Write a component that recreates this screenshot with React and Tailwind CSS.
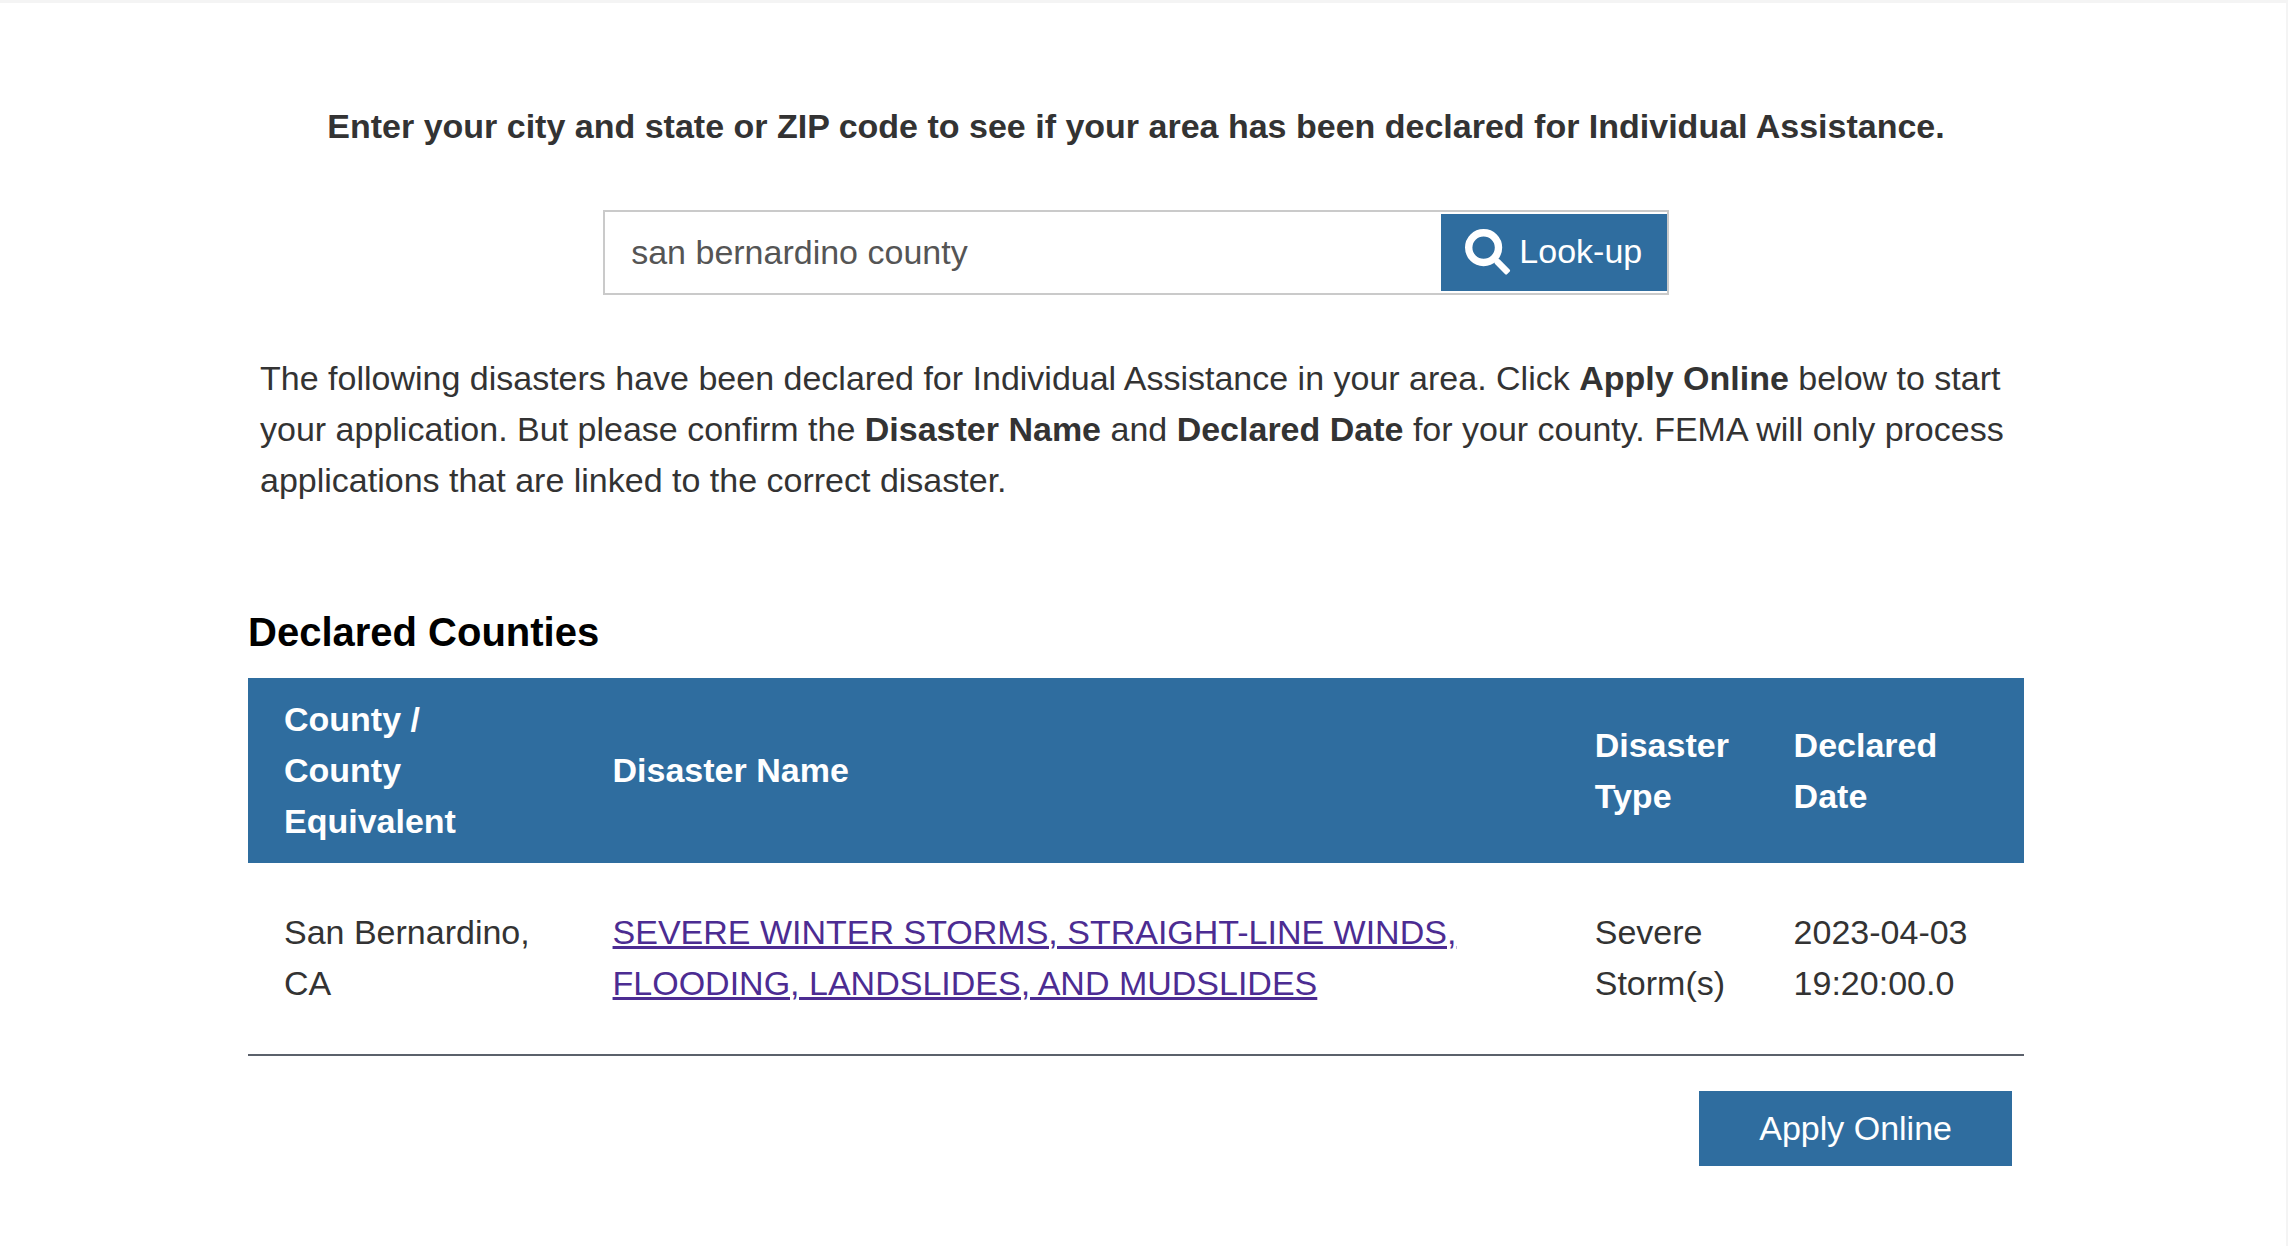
import React from 'react';

const lookup = 'san bernardino county';

function SearchIcon() {
  return (
    <svg viewBox="0 0 46 46" className="size-[46px]" aria-hidden="true" fill="currentColor">
      <circle cx="18.6" cy="18.6" r="14.9" strokeWidth="7.4" stroke="currentColor" fill="none" />
      <path d="M28 27 30.8 30.2Q33 29.2 34.7 30.6L44.8 40.7Q45.6 41.6 44.8 42.4L42 45.3Q41.1 46 40.2 45.2L29.8 34.8Q28.8 33 30 31L26 28Z" />
    </svg>
  );
}

export default function App() {
  return (
    <main className="min-h-screen border-t-3 border-r-2 border-[#f4f4f4] bg-white pr-3.5 font-['Liberation_Sans',sans-serif] text-[34px] leading-[51px] text-[#333333]">
      <div className="mx-auto w-full max-w-[1776px] pt-[98px]">
        <form onSubmit={(e) => e.preventDefault()}>
          <label htmlFor="area" className="block text-center font-bold">
            Enter your city and state or ZIP code to see if your area has been declared for Individual Assistance.
          </label>
          <div className="mx-auto mt-[58px] flex h-[85px] w-3/5 items-stretch border-2 border-[#cacaca] py-0.5">
            <input id="area" type="text" defaultValue={lookup} className="min-w-0 flex-1 px-[26px] text-[#555555] outline-none" />
            <button type="submit" className="flex w-[226px] items-center justify-center gap-2 bg-[#2f6d9f] pb-0.5 text-white">
              <SearchIcon />
              Look-up
            </button>
          </div>
        </form>
        <p className="mt-[58px] px-3">
          The following disasters have been declared for Individual Assistance in your area. Click <b>Apply Online</b> below to start your application. But please confirm the <b>Disaster Name</b> and <b>Declared Date</b> for your county. FEMA will only process applications that are linked to the correct disaster.
        </p>
        <h2 className="mt-[98px] text-[40px] leading-[56px] font-bold text-black">Declared Counties</h2>
        <table className="mt-[18px] w-full table-fixed border-collapse text-left">
          <colgroup>
            <col className="w-[18.5%]" />
            <col />
            <col className="w-[11.2%]" />
            <col className="w-[15%]" />
          </colgroup>
          <thead className="bg-[#2f6d9f] text-white">
            <tr className="h-[185px]">
              <th scope="col" className="pr-20 pl-9">County / County Equivalent</th>
              <th scope="col" className="pl-9">Disaster Name</th>
              <th scope="col" className="pl-9">Disaster Type</th>
              <th scope="col" className="pr-16 pl-9">Declared Date</th>
            </tr>
          </thead>
          <tbody>
            <tr className="h-[192px] border-b-2 border-[#5b616b]">
              <td className="pb-0.5 pl-9">San Bernardino, CA</td>
              <td className="pr-20 pb-0.5 pl-9">
                <a href="#disaster" className="text-[#4c2c92] underline decoration-3">SEVERE WINTER STORMS, STRAIGHT-LINE WINDS, FLOODING, LANDSLIDES, AND MUDSLIDES</a>
              </td>
              <td className="pb-0.5 pl-9">Severe Storm(s)</td>
              <td className="pb-0.5 pl-9">2023-04-03 19:20:00.0</td>
            </tr>
          </tbody>
        </table>
        <div className="flex justify-end pt-[35px] pr-3">
          <button type="button" className="h-[75px] bg-[#2f6d9f] px-[60px] text-white">Apply Online</button>
        </div>
      </div>
    </main>
  );
}
